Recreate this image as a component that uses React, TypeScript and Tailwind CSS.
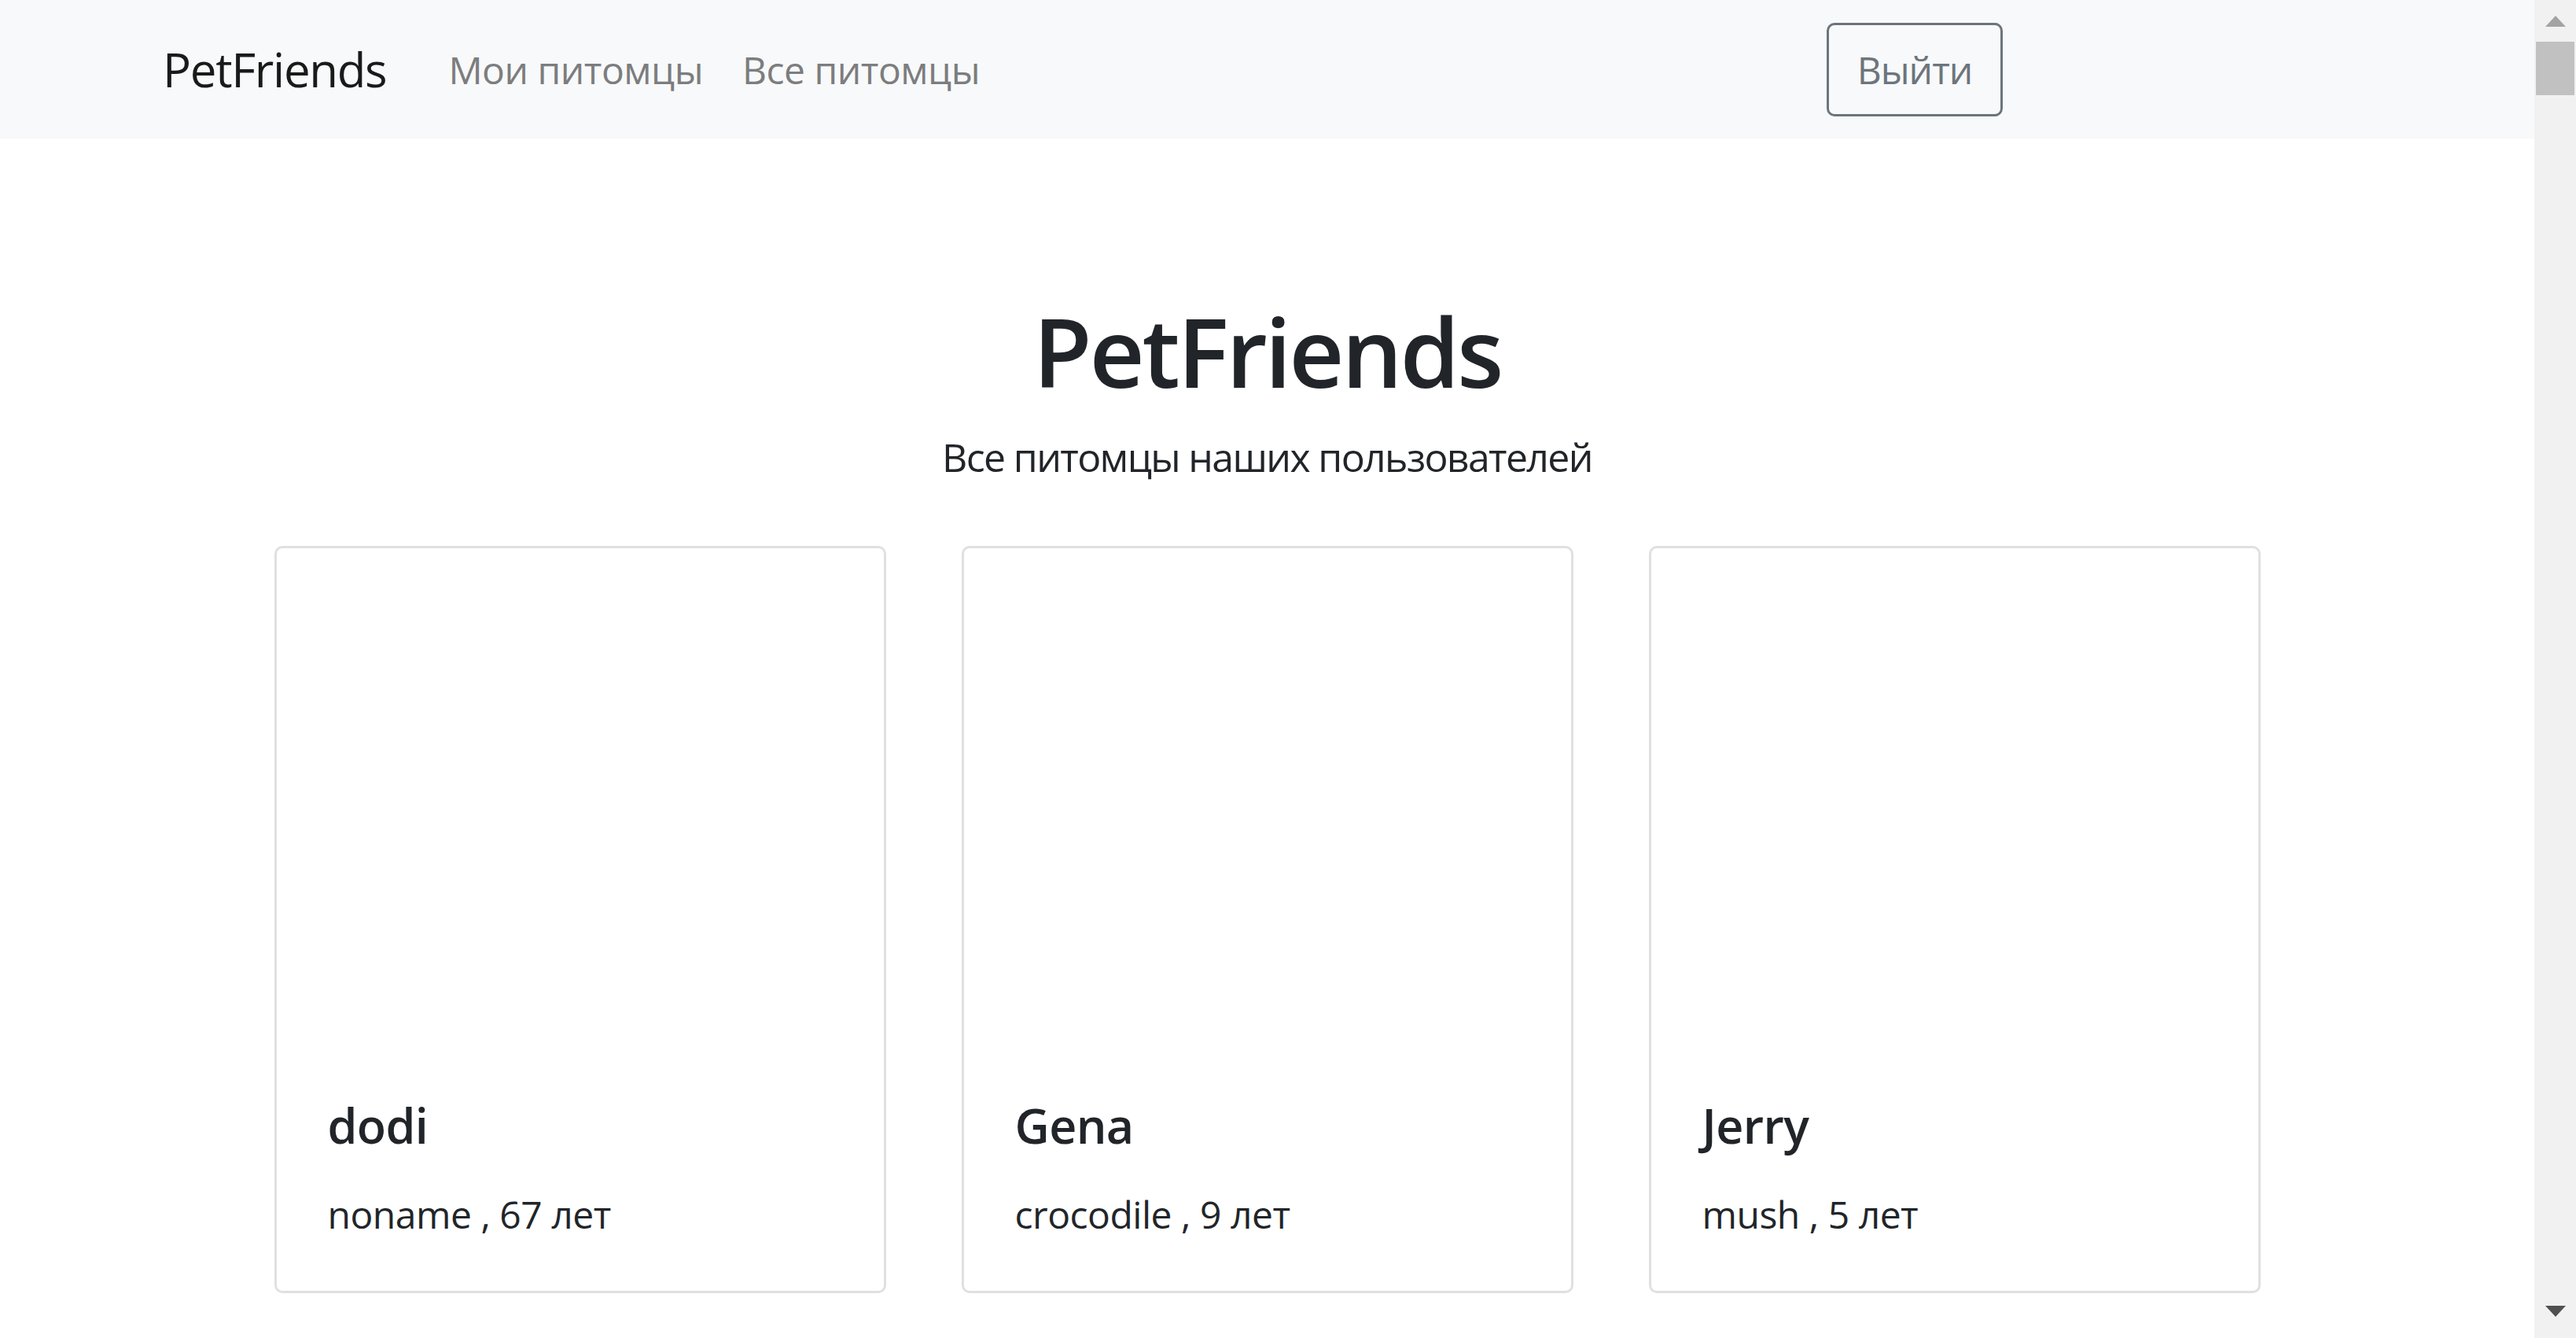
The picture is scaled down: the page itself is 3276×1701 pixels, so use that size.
import React from 'react';

interface Pet {
  name: string;
  kind: string;
  age: number;
}

const pets: Pet[] = [
  { name: 'dodi', kind: 'noname', age: 67 },
  { name: 'Gena', kind: 'crocodile', age: 9 },
  { name: 'Jerry', kind: 'mush', age: 5 },
];

const font = { fontFamily: '"Open Sans", "Noto Sans", sans-serif' };

const PetCard: React.FC<{ pet: Pet }> = ({ pet }) => (
  <div className="flex h-[950px] w-[778px] flex-col justify-end rounded-[10px] border-[3px] border-[#e0e0e0] bg-white px-[65px] pb-[60px]">
    <h5 className="text-[61px] leading-[76px] font-semibold tracking-[-0.01em] text-[#212529]">{pet.name}</h5>
    <p className="mt-[37px] text-[48px] leading-[75px] tracking-[-0.01em] text-[#212529]">
      {pet.kind} , {pet.age} лет
    </p>
  </div>
);

const Scrollbar: React.FC = () => (
  <div className="flex h-full w-[53px] shrink-0 flex-col bg-[#f1f1f1]">
    <div className="flex h-[53px] items-start justify-center pt-[20px]">
      <svg width="26" height="14" viewBox="0 0 26 14">
        <path d="M13 0 L26 14 L0 14 Z" fill="#a3a3a3" />
      </svg>
    </div>
    <div className="ml-[2px] h-[68px] w-[49px] bg-[#c1c1c1]" />
    <div className="flex-1" />
    <div className="flex h-[54px] items-start justify-center pt-[13px]">
      <svg width="26" height="14" viewBox="0 0 26 14">
        <path d="M0 0 L26 0 L13 14 Z" fill="#505050" />
      </svg>
    </div>
  </div>
);

export default function App() {
  return (
    <div className="flex h-screen w-full overflow-hidden bg-white" style={font}>
      <div className="flex min-w-0 flex-1 flex-col">
        <nav className="flex h-[176px] shrink-0 items-center bg-[#f8f9fa] pl-[207px] pr-[676px]">
          <a className="mr-[54px] text-[60px] leading-[94px] tracking-[-0.022em] text-[#1a1a1a]">PetFriends</a>
          <a className="px-[25px] text-[48px] leading-[75px] tracking-[-0.01em] text-[#7c7d7e]">Мои питомцы</a>
          <a className="px-[25px] text-[48px] leading-[75px] tracking-[-0.01em] text-[#7c7d7e]">Все питомцы</a>
          <button className="ml-auto flex h-[119px] w-[224px] items-center justify-center rounded-[10px] border-[3px] border-[#6c757d] text-[48px] leading-[75px] tracking-[-0.02em] text-[#6c757d]">
            Выйти
          </button>
        </nav>
        <main className="flex flex-col items-center pt-[194px]">
          <h1 className="text-[122px] leading-[152px] font-semibold tracking-[-0.027em] text-[#212529]">PetFriends</h1>
          <p className="mt-[20px] text-[50px] leading-[78px] tracking-[-0.033em] text-[#212529]">Все питомцы наших пользователей</p>
          <div className="mt-[74px] flex justify-center gap-[96px]">
            {pets.map((p) => (
              <PetCard key={p.name} pet={p} />
            ))}
          </div>
        </main>
      </div>
      <Scrollbar />
    </div>
  );
}
